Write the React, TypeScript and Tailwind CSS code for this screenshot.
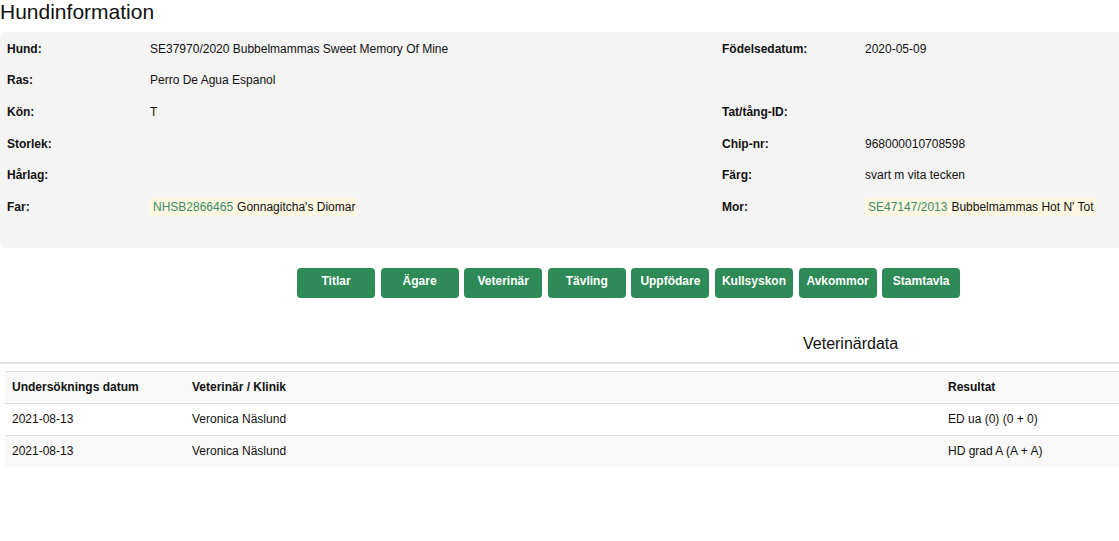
import React from "react";

const left = [
  ["Hund:", "SE37970/2020 Bubbelmammas Sweet Memory Of Mine"],
  ["Ras:", "Perro De Agua Espanol"],
  ["Kön:", "T"],
  ["Storlek:", ""],
  ["Hårlag:", ""],
];
const right = [
  ["Födelsedatum:", "2020-05-09"],
  ["", ""],
  ["Tat/tång-ID:", ""],
  ["Chip-nr:", "968000010708598"],
  ["Färg:", "svart m vita tecken"],
];

const buttons = ["Titlar", "Ägare", "Veterinär", "Tävling", "Uppfödare", "Kullsyskon", "Avkommor", "Stamtavla"];

function Parent({ id, name }: { id: string; name: string }) {
  return (
    <span className="inline-flex items-center h-[18px] bg-[#fdf7e2] pl-[3px] pr-[2px]">
      <span className="text-[#3b8a68]">{id}</span>
      <span className="ml-[4px]">{name}</span>
    </span>
  );
}

export default function App() {
  return (
    <div className="w-[1119px] h-[541px] overflow-hidden bg-white text-[#111] font-['Liberation_Sans',Arial,sans-serif]">
      <div className="h-8 text-[21px] leading-6">Hundinformation</div>
      <div className="bg-[#f4f4f4] rounded-l-md pt-[1px] pb-[25px] text-[12px]">
        <div className="grid grid-cols-[143px_572px_143px_1fr] pl-[7px]">
          {left.map((l, i) => (
            <React.Fragment key={i}>
              <div className="h-[31.6px] flex items-center font-bold">{l[0]}</div>
              <div className="h-[31.6px] flex items-center">{l[1]}</div>
              <div className="h-[31.6px] flex items-center font-bold">{right[i][0]}</div>
              <div className="h-[31.6px] flex items-center">{right[i][1]}</div>
            </React.Fragment>
          ))}
          <div className="h-[31.6px] flex items-center font-bold">Far:</div>
          <div className="h-[31.6px] flex items-center">
            <Parent id="NHSB2866465" name="Gonnagitcha's Diomar" />
          </div>
          <div className="h-[31.6px] flex items-center font-bold">Mor:</div>
          <div className="h-[31.6px] flex items-center">
            <Parent id="SE47147/2013" name="Bubbelmammas Hot N' Tot" />
          </div>
        </div>
      </div>
      <div className="flex gap-[5.6px] ml-[297px] mt-[20px]">
        {buttons.map((b) => (
          <div
            key={b}
            className="w-[78px] h-[30px] rounded-[4px] bg-[#2e8a57] text-white font-bold text-[12px] flex items-center justify-center pb-[3px]"
          >
            {b}
          </div>
        ))}
      </div>
      <div className="pl-[803px] mt-[36px] text-[16px] leading-5">Veterinärdata</div>
      <div className="mt-[8px] border-b-2 border-[#e2e2e2]"></div>
      <div className="ml-[5px] mt-[7px] border-t border-[#dddddd] text-[12px]">
        <div className="grid grid-cols-[180px_756px_1fr] bg-[#f8f8f8] h-[32px] items-center font-bold border-b border-[#dddddd]">
          <div className="pl-[7px]">Undersöknings datum</div>
          <div className="pl-[7px]">Veterinär / Klinik</div>
          <div className="pl-[7px]">Resultat</div>
        </div>
        <div className="grid grid-cols-[180px_756px_1fr] bg-white h-[32px] items-center border-b border-[#dddddd]">
          <div className="pl-[7px]">2021-08-13</div>
          <div className="pl-[7px]">Veronica Näslund</div>
          <div className="pl-[7px]">ED ua (0) (0 + 0)</div>
        </div>
        <div className="grid grid-cols-[180px_756px_1fr] bg-[#f8f8f8] h-[31px] items-center">
          <div className="pl-[7px]">2021-08-13</div>
          <div className="pl-[7px]">Veronica Näslund</div>
          <div className="pl-[7px]">HD grad A (A + A)</div>
        </div>
      </div>
    </div>
  );
}
